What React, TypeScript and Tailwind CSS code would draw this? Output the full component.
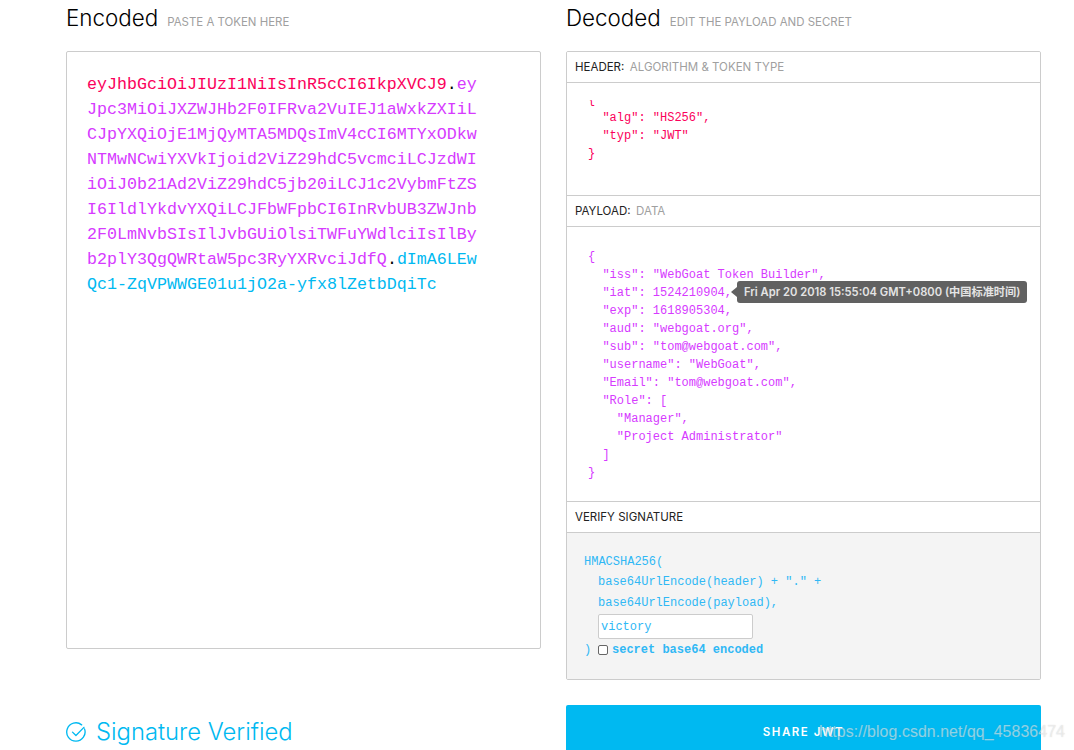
import React from "react";

const mono = "font-['Liberation_Mono',monospace]";
const inter = "font-['Inter',sans-serif]";

function Title({ title, sub }: { title: string; sub: string }) {
  return (
    <div className="flex items-baseline gap-[9px] h-[36px] pt-[3px]">
      <h2 className={`${inter} text-[22.4px] leading-[30px] font-light text-black`}>{title}</h2>
      <span className={`${inter} text-[11.45px] leading-[14px] uppercase text-[#a0a0a0]`}>{sub}</span>
    </div>
  );
}

function PanelHead({ label, sub }: { label: string; sub?: string }) {
  return (
    <div className={`${inter} h-[31px] flex items-center px-[8px] pt-[1px] text-[11.5px] uppercase text-[#222] border-b border-[#ccc] bg-white`}>
      <span>{label}</span>
      {sub && <span className="ml-[5.5px] text-[#a0a0a0]">{sub}</span>}
    </div>
  );
}

const payload = `{
  "iss": "WebGoat Token Builder",
  "iat": 1524210904,
  "exp": 1618905304,
  "aud": "webgoat.org",
  "sub": "tom@webgoat.com",
  "username": "WebGoat",
  "Email": "tom@webgoat.com",
  "Role": [
    "Manager",
    "Project Administrator"
  ]
}`;

export default function App() {
  return (
    <div className="relative h-[750px] w-[1074px] overflow-hidden bg-white">
      <div className="flex gap-[25px] pl-[66px] pr-[33px]">
        <div className="w-[475px]">
          <Title title="Encoded" sub="Paste a token here" />
          <div className="mt-[15px]" />
          <div className={`${mono} h-[598px] rounded-[2px] border border-[#ccc] pl-[20px] pt-[20px] text-[16.66px] leading-[25px]`}>
            <div className="text-[#fb015b]">
              eyJhbGciOiJIUzI1NiIsInR5cCI6IkpXVCJ9<span className="text-black">.</span>
              <span className="text-[#d63aff]">ey</span>
            </div>
            <div className="text-[#d63aff]">Jpc3MiOiJXZWJHb2F0IFRva2VuIEJ1aWxkZXIiL</div>
            <div className="text-[#d63aff]">CJpYXQiOjE1MjQyMTA5MDQsImV4cCI6MTYxODkw</div>
            <div className="text-[#d63aff]">NTMwNCwiYXVkIjoid2ViZ29hdC5vcmciLCJzdWI</div>
            <div className="text-[#d63aff]">iOiJ0b21Ad2ViZ29hdC5jb20iLCJ1c2VybmFtZS</div>
            <div className="text-[#d63aff]">I6IldlYkdvYXQiLCJFbWFpbCI6InRvbUB3ZWJnb</div>
            <div className="text-[#d63aff]">2F0LmNvbSIsIlJvbGUiOlsiTWFuYWdlciIsIlBy</div>
            <div className="text-[#d63aff]">
              b2plY3QgQWRtaW5pc3RyYXRvciJdfQ<span className="text-black">.</span>
              <span className="text-[#00b9f1]">dImA6LEw</span>
            </div>
            <div className="text-[#00b9f1]">Qc1-ZqVPWWGE01u1jO2a-yfx8lZetbDqiTc</div>
          </div>
          <div className="mt-[69px] flex items-center gap-[9px] text-[#00b9f1]">
            <svg viewBox="0 0 22 22" className="h-[21px] w-[21px]" fill="none" stroke="currentColor" strokeWidth="1.4" strokeLinecap="round" strokeLinejoin="round">
              <path d="M19.4 7.2A9.6 9.6 0 1 1 16.4 3" />
              <path d="M6.8 10.6l3.6 3.6 8.4-8.6" />
            </svg>
            <span className={`${inter} text-[23.8px] leading-[28px] font-light`}>Signature Verified</span>
          </div>
        </div>

        <div className="w-[475px]">
          <Title title="Decoded" sub="Edit the payload and secret" />
          <div className="mt-[15px]" />
          <div className="overflow-hidden rounded-[2px] border border-[#ccc]">
            <PanelHead label="Header:" sub="Algorithm & token type" />
            <div className={`${mono} h-[113px] pl-[21px] pt-[17px] text-[12px] leading-[18px] text-[#fb015b] border-b border-[#ccc]`}>
              <div className="flex h-[9px] items-end overflow-hidden">
                <span className="block">{"{"}</span>
              </div>
              <pre className={`${mono}`}>{`  "alg": "HS256",
  "typ": "JWT"
}`}</pre>
            </div>
            <PanelHead label="Payload:" sub="Data" />
            <div className="relative">
              <pre className={`${mono} h-[275px] pl-[21px] pt-[21px] text-[12px] leading-[18px] text-[#d63aff] border-b border-[#ccc]`}>{payload}</pre>
              <div className="absolute left-[164px] top-[54px] flex items-center">
                <div className="h-0 w-0 border-y-[5px] border-r-[6px] border-y-transparent border-r-[#616161]" />
                <div className="h-[22px] rounded-[3px] bg-[#616161] px-[7px] text-[11.2px] font-semibold leading-[22px] whitespace-nowrap text-[#e4e4e4] font-['Inter','Noto_Sans_CJK_SC',sans-serif]">
                  Fri Apr 20 2018 15:55:04 GMT+0800 (中国标准时间)
                </div>
              </div>
            </div>
            <PanelHead label="Verify Signature" />
            <div className={`${mono} h-[146px] bg-[#f4f4f4] pl-[17px] pt-[19px] text-[12px] text-[#30b8f5]`}>
              <div className="leading-[20px]">HMACSHA256(</div>
              <div className="pl-[14px] leading-[21px]">base64UrlEncode(header) + "." +</div>
              <div className="pl-[14px] leading-[21px]">base64UrlEncode(payload),</div>
              <div className="pl-[14px]">
                <div className="flex h-[25px] w-[155px] items-center rounded-[2px] border border-[#ccc] bg-white px-[2px]">victory</div>
              </div>
              <div className="mt-[2px] flex h-[18px] items-center">
                <span className="w-[14px]">)</span>
                <span className="h-[10px] w-[10px] rounded-[2px] border border-[#666] bg-white" />
                <span className="ml-[4px] font-bold">secret base64 encoded</span>
              </div>
            </div>
          </div>
          <div className="mt-[25px] flex h-[80px] items-start justify-center rounded-[2px] bg-[#00b9f1] pt-[19px]">
            <span className={`${inter} text-[11.5px] leading-[16px] font-semibold tracking-[1.5px] text-white`}>SHARE JWT</span>
          </div>
        </div>
      </div>
      <div className="absolute left-[819px] top-[721px] font-['Liberation_Sans',sans-serif] text-[16.05px] leading-[20px] whitespace-nowrap text-white/50 [text-shadow:0_0_1px_rgba(120,120,120,0.35)]">
        https://blog.csdn.net/qq_45836474
      </div>
    </div>
  );
}
